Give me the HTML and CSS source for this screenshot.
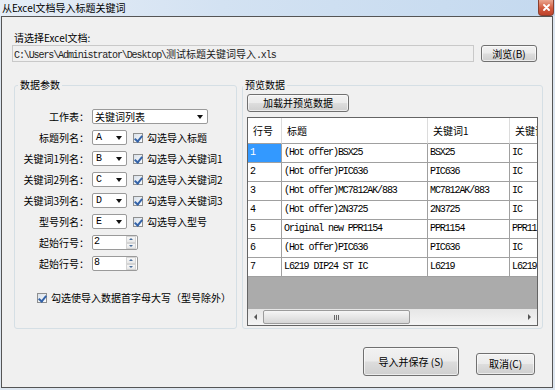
FILE: index.html
```html
<!DOCTYPE html>
<html lang="zh-CN">
<head>
    <meta charset="UTF-8">
    <meta name="viewport" content="width=device-width, initial-scale=1.0">
    <title>从Excel文档导入标题关键词</title>
    <link rel="stylesheet" href="styles.css">
</head>
<body>
    <div class="win">
        <div class="win__title">
            <span class="win__caption">从Excel文档导入标题关键词</span>
            <span class="win__close">
                <svg width="7" height="7" viewBox="0 0 7 7"><path d="M1 1 L6 6 M6 1 L1 6" stroke="#fff" stroke-width="1.8" stroke-linecap="round"/></svg>
            </span>
        </div>

        <div class="win__client">
            <p class="file__label">请选择Excel文档:</p>
            <div class="file">
                <div class="file__path bm">C:\Users\Administrator\Desktop\<span class="cjk">测试标题关键词导入</span>.xls</div>
                <button class="btn file__browse">浏览(B)</button>
            </div>

            <div class="groups">
                <fieldset class="group group--params">
                    <legend>数据参数</legend>
                    <div class="form">
                        <span class="form__label">工作表：</span>
                        <div class="form__field">
                            <span class="combo combo--wide"><span>关键词列表</span><i class="combo__arrow"></i></span>
                        </div>

                        <span class="form__label">标题列名：</span>
                        <div class="form__field">
                            <span class="combo"><span class="bm">A</span><i class="combo__arrow"></i></span>
                            <span class="check"><i class="cb"></i>勾选导入标题</span>
                        </div>

                        <span class="form__label">关键词1列名：</span>
                        <div class="form__field">
                            <span class="combo"><span class="bm">B</span><i class="combo__arrow"></i></span>
                            <span class="check"><i class="cb"></i>勾选导入关键词1</span>
                        </div>

                        <span class="form__label">关键词2列名：</span>
                        <div class="form__field">
                            <span class="combo"><span class="bm">C</span><i class="combo__arrow"></i></span>
                            <span class="check"><i class="cb"></i>勾选导入关键词2</span>
                        </div>

                        <span class="form__label">关键词3列名：</span>
                        <div class="form__field">
                            <span class="combo"><span class="bm">D</span><i class="combo__arrow"></i></span>
                            <span class="check"><i class="cb"></i>勾选导入关键词3</span>
                        </div>

                        <span class="form__label">型号列名：</span>
                        <div class="form__field">
                            <span class="combo"><span class="bm">E</span><i class="combo__arrow"></i></span>
                            <span class="check"><i class="cb"></i>勾选导入型号</span>
                        </div>

                        <span class="form__label">起始行号：</span>
                        <div class="form__field">
                            <span class="spin"><span class="spin__value bm">2</span><span class="spin__btns"><i class="spin__btn spin__btn--up"></i><i class="spin__btn spin__btn--down"></i></span></span>
                        </div>

                        <span class="form__label">起始行号：</span>
                        <div class="form__field">
                            <span class="spin"><span class="spin__value bm">8</span><span class="spin__btns"><i class="spin__btn spin__btn--up"></i><i class="spin__btn spin__btn--down"></i></span></span>
                        </div>
                    </div>
                    <div class="check caps"><i class="cb"></i>勾选使导入数据首字母大写（型号除外）</div>
                </fieldset>

                <fieldset class="group group--preview">
                    <legend>预览数据</legend>
                    <div class="preview">
                        <button class="btn preview__load">加载并预览数据</button>
                        <div class="grid">
                            <div class="grid__body">
                                <div class="grid__row grid__row--head">
                                    <span class="grid__cell">行号</span>
                                    <span class="grid__cell">标题</span>
                                    <span class="grid__cell">关键词1</span>
                                    <span class="grid__cell">关键词2</span>
                                </div>
                                <div class="grid__row">
                                    <span class="grid__cell grid__cell--sel">1</span>
                                    <span class="grid__cell">(Hot offer)BSX25</span>
                                    <span class="grid__cell">BSX25</span>
                                    <span class="grid__cell">IC</span>
                                </div>
                                <div class="grid__row">
                                    <span class="grid__cell">2</span>
                                    <span class="grid__cell">(Hot offer)PIC636</span>
                                    <span class="grid__cell">PIC636</span>
                                    <span class="grid__cell">IC</span>
                                </div>
                                <div class="grid__row">
                                    <span class="grid__cell">3</span>
                                    <span class="grid__cell">(Hot offer)MC7812AK/883</span>
                                    <span class="grid__cell">MC7812AK/883</span>
                                    <span class="grid__cell">IC</span>
                                </div>
                                <div class="grid__row">
                                    <span class="grid__cell">4</span>
                                    <span class="grid__cell">(Hot offer)2N3725</span>
                                    <span class="grid__cell">2N3725</span>
                                    <span class="grid__cell">IC</span>
                                </div>
                                <div class="grid__row">
                                    <span class="grid__cell">5</span>
                                    <span class="grid__cell">Original new PPR1154</span>
                                    <span class="grid__cell">PPR1154</span>
                                    <span class="grid__cell">PPR1154</span>
                                </div>
                                <div class="grid__row">
                                    <span class="grid__cell">6</span>
                                    <span class="grid__cell">(Hot offer)PIC636</span>
                                    <span class="grid__cell">PIC636</span>
                                    <span class="grid__cell">IC</span>
                                </div>
                                <div class="grid__row">
                                    <span class="grid__cell">7</span>
                                    <span class="grid__cell">L6219 DIP24 ST IC</span>
                                    <span class="grid__cell">L6219</span>
                                    <span class="grid__cell">L6219</span>
                                </div>
                            </div>
                            <div class="hscroll">
                                <span class="hscroll__arrow"><i class="hscroll__left"></i></span>
                                <span class="hscroll__track">
                                    <span class="hscroll__thumb"><i></i><i></i><i></i></span>
                                </span>
                                <span class="hscroll__arrow"><i class="hscroll__right"></i></span>
                            </div>
                        </div>
                    </div>
                </fieldset>
            </div>

            <div class="actions">
                <button class="btn actions__save">导入并保存 (S)</button>
                <button class="btn actions__cancel">取消(C)</button>
            </div>
        </div>
    </div>
</body>
</html>
```

FILE: styles.css
```css
* {
    box-sizing: border-box;
}

html, body {
    margin: 0;
}

body {
    background-color: #dde6f0;
    font-family: "Noto Sans CJK SC", "Noto Sans", sans-serif;
    font-size: 10px;
    line-height: 14px;
    color: #000;
}

/* bitmap-like latin text of the old dialog */
.bm {
    font-family: "Liberation Mono", "Noto Sans CJK SC", monospace;
    font-size: 10px;
    letter-spacing: -1.1px;
}

.cjk {
    font-family: "Noto Sans CJK SC", sans-serif;
    letter-spacing: 0;
}

.win {
    width: 555px;
    height: 390px;
    display: flex;
    flex-direction: column;
}

.win__title {
    height: 16px;
    display: flex;
    justify-content: space-between;
    align-items: flex-start;
    background: linear-gradient(to right, #e6edf6 0%, #d3e2f2 40%, #c4d9ef 100%);
}

.win__caption {
    padding: 1px 0 0 2px;
}

.win__close {
    width: 16px;
    height: 16px;
    margin-right: 1px;
    display: flex;
    align-items: center;
    justify-content: center;
    background: linear-gradient(#eaa690, #d25a3e 55%, #c0432b);
    border: 1px solid #8a3f2e;
    border-top: none;
    border-radius: 0 0 4px 4px;
}

.win__client {
    flex: 1;
    margin: 0 2px 2px 1px;
    border: 1px solid #555;
    background-color: #f0f0f0;
    padding-left: 10px;
}

.file__label {
    margin: 14px 0 0 2px;
}

.file {
    display: flex;
    gap: 7px;
    width: 525px;
    height: 17px;
}

.file__path {
    flex: 1;
    border: 1px solid #c9c9c9;
    background-color: #f0f0f0;
    padding: 0 1px;
    line-height: 15px;
    white-space: nowrap;
    color: #222;
}

.file__browse {
    width: 56px;
}

.btn {
    border: 1px solid #707070;
    border-radius: 3px;
    background: linear-gradient(#f2f2f2 0%, #ebebeb 48%, #dddddd 52%, #cfcfcf 100%);
    box-shadow: inset 0 0 0 1px rgba(255, 255, 255, 0.6);
    font: inherit;
    color: #000;
    padding: 0;
}

.groups {
    display: flex;
    gap: 5px;
    margin: 16px 0 0 2px;
    height: 251px;
}

.group {
    margin: 0;
    min-width: 0;
    border: 1px solid #d5dfe5;
    border-radius: 3px;
}

.group legend {
    padding: 0 2px;
    line-height: 14px;
}

.group--params {
    width: 223px;
    padding: 14px 0 0 0;
}

.group--params legend {
    margin-left: 3px;
}

.group--preview {
    width: 301px;
    padding: 2px 3px 3px 0;
}

.form {
    display: grid;
    grid-template-columns: 74px auto;
    grid-auto-rows: 21px;
    column-gap: 3px;
    align-items: center;
}

.form__label {
    text-align: right;
    white-space: nowrap;
}

.form__field {
    display: flex;
    align-items: center;
    gap: 6px;
}

.combo {
    width: 35px;
    height: 15px;
    display: flex;
    align-items: center;
    justify-content: space-between;
    padding: 0 4px 0 3px;
    background-color: #fff;
    border: 1px solid #9a9a9a;
    border-radius: 2px;
}

.combo--wide {
    width: 116px;
    padding-left: 2px;
}

.combo__arrow {
    border-left: 3px solid transparent;
    border-right: 3px solid transparent;
    border-top: 4px solid #111;
}

.check {
    display: flex;
    align-items: center;
    gap: 4px;
    white-space: nowrap;
}

.cb {
    position: relative;
    width: 10px;
    height: 10px;
    border: 1px solid #8e8f8f;
    background: linear-gradient(135deg, #d9e1ea, #fbfcfd);
}

.cb::after {
    content: "";
    position: absolute;
    left: 2px;
    top: 0;
    width: 3px;
    height: 6px;
    border: solid #3463a8;
    border-width: 0 2px 2px 0;
    transform: rotate(40deg);
}

.spin {
    width: 46px;
    height: 15px;
    display: flex;
    background-color: #fff;
    border: 1px solid #9a9a9a;
    border-radius: 2px;
}

.spin__value {
    flex: 1;
    padding-left: 1px;
    line-height: 12px;
}

.spin__btns {
    width: 10px;
    margin: 0 1px 0 0;
    display: flex;
    flex-direction: column;
}

.spin__btn {
    flex: 1;
    display: flex;
    align-items: center;
    justify-content: center;
    border: 1px solid #d4d4d4;
    background: linear-gradient(#f7f7f7, #e8e8e8);
}

.spin__btn::after {
    content: "";
    border-left: 2px solid transparent;
    border-right: 2px solid transparent;
}

.spin__btn--up::after {
    border-bottom: 2px solid #4a6f9c;
}

.spin__btn--down::after {
    border-top: 2px solid #4a6f9c;
}

.caps {
    height: 21px;
    margin: 13px 0 0 22px;
}

.preview {
    margin-left: 4px;
}

.preview__load {
    display: block;
    width: 102px;
    height: 18px;
}

.grid {
    margin-top: 5px;
    width: 291px;
    height: 209px;
    display: flex;
    flex-direction: column;
    border: 1px solid #646464;
    background-color: #ababab;
    overflow: hidden;
}

.grid__body {
    flex: 1;
    overflow: hidden;
}

.grid__row {
    display: grid;
    grid-template-columns: 34px 146px 82px 82px;
    width: max-content;
    height: 19px;
    background-color: #fff;
}

.grid__cell {
    border-right: 1px solid #a0a0a0;
    border-bottom: 1px solid #a0a0a0;
    padding-left: 2px;
    white-space: nowrap;
    overflow: hidden;
    font-family: "Liberation Mono", monospace;
    letter-spacing: -1.1px;
    line-height: 18px;
}

.grid__row--head {
    height: 26px;
}

.grid__row--head .grid__cell {
    padding-left: 5px;
    font-family: "Noto Sans CJK SC", sans-serif;
    letter-spacing: 0;
    line-height: 25px;
    border-right-color: #dcdcdc;
}

.grid__cell--sel {
    background-color: #3399ff;
    color: #fff;
}

.hscroll {
    height: 16px;
    display: flex;
    align-items: center;
    background: linear-gradient(#e6e6e6, #f4f4f4);
}

.hscroll__arrow {
    width: 15px;
    height: 16px;
    display: flex;
    align-items: center;
    justify-content: center;
}

.hscroll__left {
    border-top: 3px solid transparent;
    border-bottom: 3px solid transparent;
    border-right: 3px solid #555;
}

.hscroll__right {
    border-top: 3px solid transparent;
    border-bottom: 3px solid transparent;
    border-left: 3px solid #555;
}

.hscroll__track {
    flex: 1;
    height: 16px;
    display: flex;
    align-items: center;
}

.hscroll__thumb {
    width: 147px;
    height: 14px;
    display: flex;
    align-items: center;
    justify-content: center;
    gap: 1px;
    border: 1px solid #9c9c9c;
    border-radius: 2px;
    background: linear-gradient(#f6f6f6, #e6e6e6 50%, #d6d6d6);
}

.hscroll__thumb > i {
    width: 1px;
    height: 5px;
    background-color: #666;
}

.actions {
    display: flex;
    justify-content: flex-end;
    align-items: flex-end;
    gap: 17px;
    margin-top: 18px;
    padding-right: 17px;
}

.actions__save {
    width: 96px;
    height: 29px;
}

.actions__cancel {
    width: 59px;
    height: 22px;
    margin-bottom: 1px;
}
```
